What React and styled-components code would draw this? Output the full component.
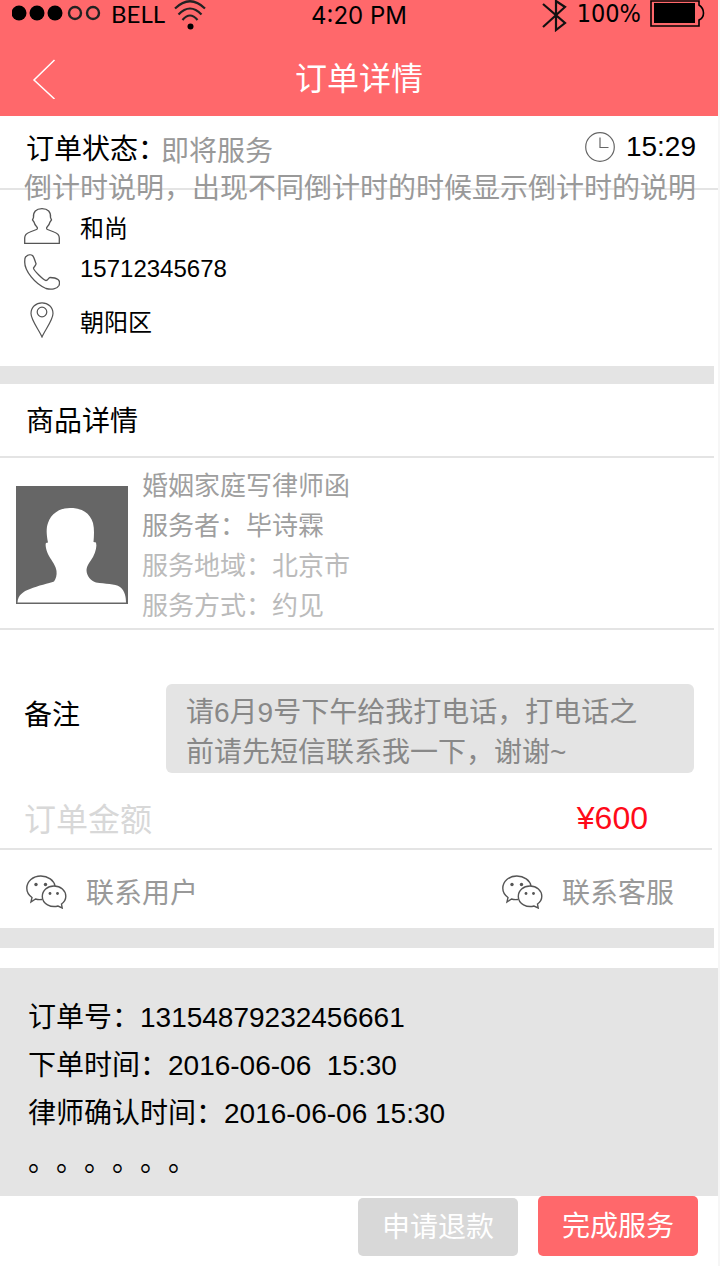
import React from "react";
import styled, { createGlobalStyle } from "styled-components";

const GlobalStyle = createGlobalStyle`
  * { box-sizing: border-box; }
  body {
    margin: 0;
    background: #f6f6f6;
    color: #000;
    font-family: "Liberation Sans", "Noto Sans CJK SC", sans-serif;
    font-size: 28px;
    line-height: 40px;
    text-spacing-trim: space-all;
  }
  h1, h2, p, dl, dd, dt { margin: 0; font-weight: 400; font-size: inherit; }
  button { font: inherit; border: 0; padding: 0; background: none; cursor: pointer; }
  svg { display: block; flex: none; }
`;

const Screen = styled.div`
  margin-right: 2px;
  background: #fff;
`;

const Header = styled.header`
  background: #ff686b;
  height: 116px;
`;

const StatusBar = styled.div`
  display: grid;
  grid-template-columns: 1fr auto 1fr;
  align-items: start;
  height: 40px;
  padding: 0 12px;
`;

const StatusGroup = styled.div`
  display: flex;
  gap: 9px;
  justify-content: ${(p) => (p.$end ? "flex-end" : "flex-start")};
`;

const Carrier = styled.span`
  font-family: Lato, sans-serif;
  font-size: 24px;
  line-height: 28px;
`;

const Battery = styled.span`
  font-family: "DejaVu Sans Condensed", "DejaVu Sans", sans-serif;
  font-stretch: condensed;
  font-size: 25px;
  line-height: 28px;
`;

const Clock = styled.time`
  font-family: Inter, sans-serif;
  font-size: 24px;
  line-height: 32px;
`;

const TitleBar = styled.div`
  display: grid;
  grid-template-columns: 1fr auto 1fr;
  align-items: center;
  padding: 0 32px;
  height: 78px;
`;

const BackButton = styled.button`
  justify-self: start;
`;

const Title = styled.h1`
  && { font-size: 32px; }
  color: #fff;
`;

const StatusSection = styled.section`
  padding: 14px 22px 0 26px;
  border-bottom: 2px solid #e4e4e4;
`;

const StatusRow = styled.div`
  display: flex;
  justify-content: space-between;
  height: 43px;
`;

const StatusPair = styled.div`
  display: flex;
`;

const StatusLabel = styled.span`
  line-height: 40px;
`;

const StatusValue = styled.span`
  margin-left: -5px;
  line-height: 44px;
  color: #999;
`;

const Countdown = styled.div`
  display: flex;
  align-items: center;
  gap: 11px;
  height: 34px;
`;

const Explanation = styled.p`
  margin: 0 -22px -17px -2px;
  line-height: 32px;
  color: #999;
`;

const Contact = styled.section`
  display: grid;
  gap: 10px;
  padding: 18px 24px 28px;
`;

const ContactRow = styled.div`
  display: flex;
  align-items: center;
  gap: 20px;
  height: 36px;
  margin-bottom: ${(p) => (p.$spaced ? "2px" : "0")};
  font-size: 24px;
`;

const ContactText = styled.span`
  padding-bottom: ${(p) => (p.$raised ? "6px" : "0")};
  padding-top: ${(p) => (p.$raised ? "0" : "6px")};
`;

const Divider = styled.div`
  height: ${(p) => p.$height}px;
  margin-right: 4px;
  background: #e4e4e4;
`;

const SectionTitle = styled.h2`
  && { line-height: 68px; }
  padding: 4px 0 0 26px;
  margin-right: 4px;
  border-bottom: 2px solid #e4e4e4;
`;

const Product = styled.section`
  display: flex;
  align-items: flex-start;
  gap: 14px;
  padding: 8px 16px 2px;
  margin-right: 4px;
  border-bottom: 2px solid #e4e4e4;
`;

const Avatar = styled.svg`
  margin-top: 20px;
`;

const ProductLine = styled.p`
  font-size: 26px;
  color: ${(p) => (p.$light ? "#bbb" : "#9f9f9f")};
`;

const Remark = styled.dl`
  display: grid;
  grid-template-columns: 142px 1fr;
  padding: 54px 24px 0;
`;

const RemarkLabel = styled.dt`
  padding-top: 12px;
`;

const RemarkBox = styled.dd`
  && { margin: 0; }
  padding: 9px 40px 0 20px;
  border-radius: 6px;
  background: #e4e4e4;
  color: #888;
`;

const Amount = styled.dl`
  display: flex;
  justify-content: space-between;
  margin-right: 6px;
  padding: 27px 64px 8px 24px;
  border-bottom: 2px solid #e4e4e4;
  font-size: 32px;
`;

const AmountLabel = styled.dt`
  color: #d8d8d8;
`;

const AmountValue = styled.dd`
  line-height: 36px;
  color: #ff0a19;
`;

const Links = styled.div`
  display: flex;
  justify-content: space-between;
  padding: 0 44px 0 26px;
`;

const LinkButton = styled.button`
  display: flex;
  align-items: center;
  gap: 19px;
  height: 78px;
  padding-top: 6px;
  color: #999;
`;

const LinkText = styled.span`
  padding-top: 4px;
`;

const Info = styled.section`
  margin-top: 20px;
  padding: 26px 28px 10px;
  background: #e4e4e4;
`;

const InfoLine = styled.p`
  line-height: 48px;
  white-space: pre-wrap;
`;

const Actions = styled.footer`
  display: flex;
  justify-content: flex-end;
  align-items: flex-end;
  gap: 20px;
  padding: 0 20px 10px;
`;

const ActionButton = styled.button`
  && {
    width: 160px;
    height: ${(p) => (p.$primary ? 60 : 58)}px;
    padding-top: 2px;
    border-radius: 5px;
    background: ${(p) => (p.$primary ? "#ff686b" : "#d8d8d8")};
    color: #fff;
  }
`;

const SignalIcon = () => (
  <svg width="90" height="26" viewBox="0 0 90 26">
    {[7, 25, 43].map((x) => <circle key={x} cx={x} cy="13" r="7.500" />)}
    {[63, 81].map((x) => <circle key={x} cx={x} cy="13" r="6" fill="none" stroke="#222" strokeWidth="2.400" />)}
  </svg>
);

const WifiIcon = () => (
  <svg width="32" height="30" viewBox="0 0 32 30" fill="none" stroke="#222" strokeWidth="2.200">
    <path d="M1 8.500Q16-6 31 8.500M4.500 14.500Q16 2.500 27.500 14.500M8.500 20Q16 11 23.500 20" />
    <circle cx="16.500" cy="26.500" r="3" fill="#000" stroke="none" />
  </svg>
);

const BluetoothIcon = () => (
  <svg width="26" height="32" viewBox="0 0 26 32" fill="none" stroke="#111" strokeWidth="2.200">
    <path d="M1 4 23 23 14 30V1L23 7 1 27" />
  </svg>
);

const BatteryIcon = () => (
  <svg width="56" height="28" viewBox="0 0 56 28">
    <path d="M1 1H49V5Q53.500 8 53.500 13T49 20V26H1Z" fill="none" stroke="#000" strokeWidth="1.600" />
    <rect x="4" y="3" width="41" height="20" />
  </svg>
);

const BackIcon = () => (
  <svg width="24" height="40" viewBox="0 0 24 40" fill="none" stroke="#fff" strokeWidth="1.500">
    <path d="M22.500 1 2 21 22.500 40" />
  </svg>
);

const ClockIcon = () => (
  <svg width="30" height="30" viewBox="0 0 30 30" fill="none" stroke="#666" strokeWidth="1.200">
    <circle cx="15" cy="15" r="14.300" />
    <path d="M15 5.500V15.500H23.500" />
  </svg>
);

const PersonIcon = () => (
  <svg width="36" height="36" viewBox="0 0 36 36" fill="none" stroke="#555" strokeWidth="1.300">
    <path d="M.7 35.300V30C.7 26 3 25 6 24L12.500 21.500C14 21 13.500 19.500 12.500 18.500C11 17 10.500 16 10 14L8.500 12L9.500 9.500C9 4 12 .7 18 .7S27 4 26.500 9.500L27.500 12L26 14C25.500 16 25 17 23.500 18.500C22.500 19.500 22 21 23.500 21.500L30 24C33 25 35.300 26 35.300 30V35.300Z" />
  </svg>
);

const PhoneIcon = () => (
  <svg width="36" height="36" viewBox="0 0 36 36" fill="none" stroke="#555" strokeWidth="1.300">
    <path d="M1.500 3C4 .5 7 .3 8.500 1.500C10 3 11 7 12 9.500C12.500 11 10 12.500 9.500 14C9 16 20 26.500 22 26.500C24 26.500 24.500 23.500 26 23.500C28 23.500 32 24 34 25.500C36 27 35.500 30 35 31.500C33 35 27.500 36 22 34.500C11 30 .7 17 .7 8C.7 6 .7 4 1.500 3Z" />
  </svg>
);

const PinIcon = () => (
  <svg width="36" height="36" viewBox="0 0 36 36" fill="none" stroke="#555" strokeWidth="1.200">
    <path d="M18 35C15 28 7 18 7 11.500C7 5 12 .8 18 .8S29 5 29 11.500C29 18 21 28 18 35Z" />
    <circle cx="18" cy="10" r="4.800" />
  </svg>
);

const ChatIcon = () => (
  <svg width="41" height="34" viewBox="0 0 41 34" fill="none" stroke="#555" strokeWidth="1.400">
    <path d="M16 24.500Q12.500 25 9.500 24L5 27L6 22.500C2.500 20 .8 17 .8 13.300C.8 6.300 7 1 14.800 1C22 1 28 5.500 29 11" />
    <path d="M28 11C34.700 11 39.800 15.800 39.800 21.300C39.800 24.500 38 27.300 35.500 29L36.200 33L32 31C25 33 16.300 29 16.300 21.500C16.300 15.500 21.300 11 28 11Z" />
    <g fill="#555" stroke="none">
      <circle cx="10" cy="9.500" r="1.700" />
      <circle cx="19.500" cy="9.500" r="1.700" />
      <circle cx="24" cy="18.500" r="1.400" />
      <circle cx="31.500" cy="18.500" r="1.400" />
    </g>
  </svg>
);

const AvatarPicture = () => (
  <Avatar width="112" height="118" viewBox="0 0 112 118" role="img" aria-label="毕诗霖">
    <rect width="112" height="118" fill="#666" />
    <path fill="#fff" d="M1.500 116.500C2 109 7 105.500 14 103C22 99.500 33 97.500 38 95.500C40 93 41 89 40.500 85C40 80 36 75 33 70C30 65 29 58 30 57L32 56.500C30.500 49 30 42 32 37C35 28 43 22 54 22C66 22 74 27 77 37C78.500 43 78 50 77.500 56L80 56.500C81 60 80 65 77 71C74 76 71 79 70.500 84C70.500 90 75 95 80 96.500C89 98 99 97.500 104 101C109 105 110 111 110 116.500Z" />
  </Avatar>
);

export default function App() {
  return (
    <Screen lang="zh-CN">
      <GlobalStyle />
      <Header>
        <StatusBar>
          <StatusGroup>
            <SignalIcon />
            <Carrier>BELL</Carrier>
            <WifiIcon />
          </StatusGroup>
          <Clock>4:20 PM</Clock>
          <StatusGroup $end>
            <BluetoothIcon />
            <Battery>100%</Battery>
            <BatteryIcon />
          </StatusGroup>
        </StatusBar>
        <TitleBar>
          <BackButton aria-label="返回"><BackIcon /></BackButton>
          <Title>订单详情</Title>
        </TitleBar>
      </Header>

      <StatusSection>
        <StatusRow>
          <StatusPair>
            <StatusLabel>订单状态：</StatusLabel>
            <StatusValue>即将服务</StatusValue>
          </StatusPair>
          <Countdown>
            <ClockIcon />
            <time>15:29</time>
          </Countdown>
        </StatusRow>
        <Explanation>倒计时说明，出现不同倒计时的时候显示倒计时的说明</Explanation>
      </StatusSection>

      <Contact>
        <ContactRow><PersonIcon /><ContactText>和尚</ContactText></ContactRow>
        <ContactRow $spaced><PhoneIcon /><ContactText $raised>15712345678</ContactText></ContactRow>
        <ContactRow><PinIcon /><ContactText>朝阳区</ContactText></ContactRow>
      </Contact>

      <Divider $height={18} />
      <SectionTitle>商品详情</SectionTitle>
      <Product>
        <AvatarPicture />
        <div>
          <ProductLine>婚姻家庭写律师函</ProductLine>
          <ProductLine>服务者：毕诗霖</ProductLine>
          <ProductLine $light>服务地域：北京市</ProductLine>
          <ProductLine $light>服务方式：约见</ProductLine>
        </div>
      </Product>

      <Remark>
        <RemarkLabel>备注</RemarkLabel>
        <RemarkBox>请6月9号下午给我打电话，打电话之前请先短信联系我一下，谢谢~</RemarkBox>
      </Remark>
      <Amount>
        <AmountLabel>订单金额</AmountLabel>
        <AmountValue>¥600</AmountValue>
      </Amount>
      <Links>
        <LinkButton><ChatIcon /><LinkText>联系用户</LinkText></LinkButton>
        <LinkButton><ChatIcon /><LinkText>联系客服</LinkText></LinkButton>
      </Links>
      <Divider $height={20} />

      <Info>
        <InfoLine>订单号：13154879232456661</InfoLine>
        <InfoLine>下单时间：2016-06-06  15:30</InfoLine>
        <InfoLine>律师确认时间：2016-06-06 15:30</InfoLine>
        <InfoLine>。。。。。。</InfoLine>
      </Info>
      <Actions>
        <ActionButton>申请退款</ActionButton>
        <ActionButton $primary>完成服务</ActionButton>
      </Actions>
    </Screen>
  );
}
